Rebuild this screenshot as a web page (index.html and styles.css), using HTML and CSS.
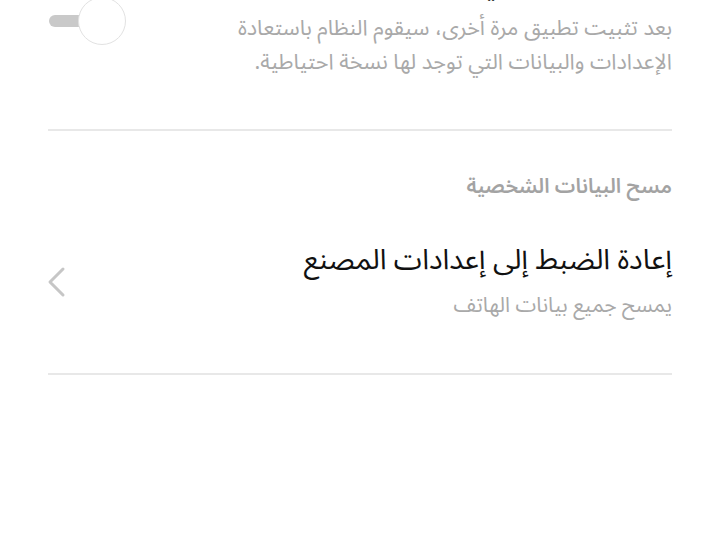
FILE: index.html
```html
<!DOCTYPE html>
<html lang="ar" dir="rtl">
<head>
<meta charset="utf-8">
<link rel="stylesheet" href="styles.css">
</head>
<body>
<div class="page">
  <div class="row first">
    <div class="text">
      <div class="title">الاستعادة التلقائية</div>
      <div class="desc">بعد تثبيت تطبيق مرة أخرى، سيقوم النظام باستعادة الإعدادات والبيانات التي توجد لها نسخة احتياطية.</div>
    </div>
    <div class="toggle">
      <span class="track"></span>
      <span class="knob"></span>
    </div>
  </div>
  <div class="divider"></div>
  <div class="section">مسح البيانات الشخصية</div>
  <div class="row item">
    <div class="text">
      <div class="title">إعادة الضبط إلى إعدادات المصنع</div>
      <div class="sub">يمسح جميع بيانات الهاتف</div>
    </div>
    <svg class="chev" width="20" height="32" viewBox="0 0 20 32">
      <polyline points="17,3 4,16 17,29" fill="none" stroke="#c6c6c6" stroke-width="3" stroke-linecap="round" stroke-linejoin="round"/>
    </svg>
  </div>
  <div class="divider"></div>
</div>
</body>
</html>
```
FILE: styles.css
```css
html, body {
  margin: 0;
  padding: 0;
  background: #ffffff;
}
body {
  font-family: "Noto Sans Arabic", "Noto Sans", "DejaVu Sans", sans-serif;
  overflow: hidden;
}
.page {
  padding: 0 48px;
}
.row {
  display: flex;
  justify-content: space-between;
}
.first {
  margin-top: -31px;
  padding-bottom: 50px;
  align-items: flex-start;
}
.text {
  display: flex;
  flex-direction: column;
}
.title {
  font-size: 28.5px;
  line-height: 36px;
  color: #111111;
}
.desc {
  margin-top: 6px;
  width: 445px;
  font-size: 21.6px;
  line-height: 34px;
  color: #a9a9a9;
}
.toggle {
  position: relative;
  width: 78px;
  height: 48px;
  margin-top: 28px;
}
.track {
  position: absolute;
  left: 1px;
  top: 18px;
  width: 60px;
  height: 12px;
  border-radius: 6px;
  background: #c9c9c9;
}
.knob {
  position: absolute;
  left: 30px;
  top: 0;
  width: 46px;
  height: 46px;
  border-radius: 50%;
  background: #ffffff;
  border: 1px solid #e2e2e2;
}
.divider {
  height: 2px;
  background: #e8e8e8;
}
.section {
  margin-top: 40px;
  font-size: 20.5px;
  line-height: 32px;
  font-weight: 600;
  color: #a3a3a3;
}
.item {
  margin-top: 34px;
  padding-bottom: 48px;
  align-items: center;
}
.item .title {
  line-height: 46px;
}
.sub {
  margin-top: 2px;
  font-size: 21px;
  line-height: 40px;
  color: #a9a9a9;
}
.chev {
  margin-left: -2px;
  margin-top: 2px;
}
```
